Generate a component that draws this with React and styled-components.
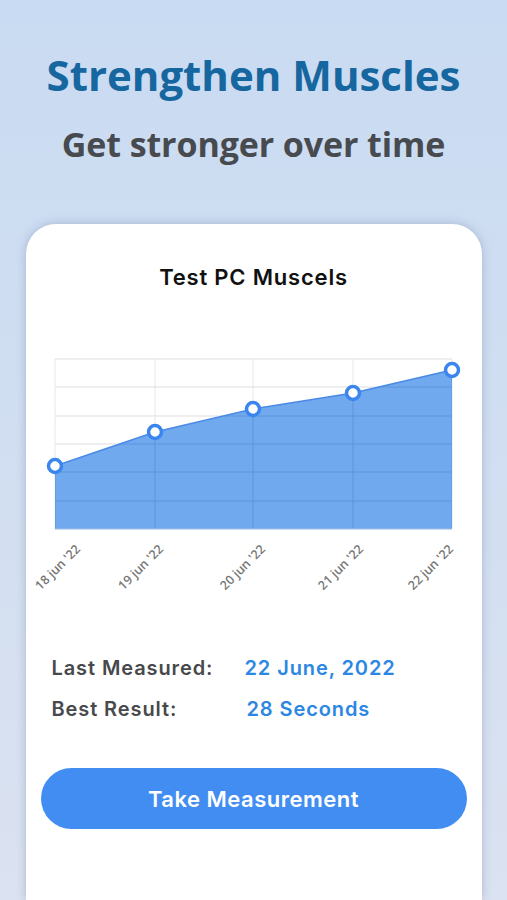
import styled, { createGlobalStyle } from "styled-components";

const GlobalStyle = createGlobalStyle`
    html, body {
        margin: 0;
        padding: 0;
    }

    body {
        background: linear-gradient(180deg, #c9dbf2 0%, #d3dff1 60%, #dbe2f1 100%);
        font-family: "Open Sans", "Liberation Sans", sans-serif;
        height: 900px;
        overflow: hidden;
    }
`;

const Screen = styled.div`
    display: flex;
    flex-direction: column;
    align-items: center;
    height: 900px;
`;

const Header = styled.header`
    display: flex;
    flex-direction: column;
    align-items: center;
    padding-top: 48px;

    h1 {
        margin: 0;
        font-size: 42px;
        line-height: 54px;
        font-weight: 700;
        color: #16669f;
        letter-spacing: 0;
    }

    h2 {
        margin: 20px 0 0;
        font-size: 34px;
        line-height: 44px;
        font-weight: 700;
        color: #474a4f;
        letter-spacing: -0.1px;
    }
`;

const Card = styled.section`
    margin-top: 58px;
    width: 456px;
    flex: 1;
    background-color: #ffffff;
    border-radius: 30px 30px 0 0;
    box-shadow: 0 0 10px rgba(90, 110, 150, 0.35);
    display: flex;
    flex-direction: column;
    align-items: center;
    padding-top: 39px;
    box-sizing: border-box;
    font-family: Inter, "Liberation Sans", sans-serif;
`;

const CardTitle = styled.h3`
    margin: 0;
    font-size: 22px;
    line-height: 28px;
    font-weight: 600;
    letter-spacing: 0.8px;
    color: #111111;
`;

const Chart = styled.svg`
    display: block;
    margin-top: 48px;
`;

const Stats = styled.div`
    display: grid;
    grid-template-columns: 193px auto;
    row-gap: 14px;
    align-self: flex-start;
    margin: 56px 0 0 26px;
    font-size: 20px;
    line-height: 27px;
    font-weight: 600;
    letter-spacing: 0.9px;
`;

const Label = styled.span`
    color: #47494c;
`;

const Value = styled.span`
    color: #2b87e3;
    padding-left: ${({ $shift }) => $shift || 0}px;
`;

const Button = styled.button`
    margin-top: 45px;
    width: 426px;
    height: 61px;
    border: none;
    border-radius: 31px;
    background-color: #418df2;
    color: #ffffff;
    font-family: Inter, "Liberation Sans", sans-serif;
    font-size: 22px;
    font-weight: 600;
    letter-spacing: 0.5px;
    cursor: pointer;
`;

// chart geometry, card-local coordinates
const left = 29;
const right = 426;
const top = 20;
const bottom = 190;
const cols = [29, 129, 227, 327, 426];
const rows = [20, 48, 77, 105, 133, 162, 190];
const points = [
    { x: 29, y: 127, label: "18 jun '22", end: 55 },
    { x: 129, y: 93, label: "19 jun '22", end: 138 },
    { x: 227, y: 70, label: "20 jun '22", end: 240 },
    { x: 327, y: 54, label: "21 jun '22", end: 338 },
    { x: 426, y: 31, label: "22 jun '22", end: 428 },
];

function ProgressChart() {

    const line = points.map((p, i) => `${i === 0 ? "M" : "L"}${p.x} ${p.y}`).join(" ");
    const area = `${line} L${right} ${bottom} L${left} ${bottom} Z`;

    return (
        <Chart width="456" height="260" viewBox="0 0 456 260">
            <defs>
                <clipPath id="areaClip">
                    <path d={area} />
                </clipPath>
            </defs>

            {rows.map(y => <line key={"r" + y} x1={left} x2={right} y1={y} y2={y} stroke="#dedede" strokeWidth="1.2" />)}
            {cols.map(x => <line key={"c" + x} x1={x} x2={x} y1={top} y2={bottom} stroke="#e8e8e8" strokeWidth="1" />)}

            <path d={area} fill="#70a9ee" />

            <g clipPath="url(#areaClip)">
                {rows.map(y => <line key={"ir" + y} x1={left} x2={right} y1={y} y2={y} stroke="#5f95dc" strokeWidth="1.2" />)}
                {cols.map(x => <line key={"ic" + x} x1={x} x2={x} y1={top} y2={bottom} stroke="#5f95dc" strokeWidth="1" />)}
            </g>

            <path d={line} fill="none" stroke="#4a8ae6" strokeWidth="1.5" />
            <line x1={left} x2={right} y1={bottom} y2={bottom} stroke="#a8cbf0" strokeWidth="1" />

            {points.map(p => (
                <circle key={p.x} cx={p.x} cy={p.y} r="6.5" fill="#ffffff" stroke="#3a86ee" strokeWidth="3.5" />
            ))}

            {points.map(p => (
                <text
                    key={"t" + p.x}
                    x={p.end}
                    y={bottom + 21}
                    transform={`rotate(-45 ${p.end} ${bottom + 21})`}
                    textAnchor="end"
                    fontSize="12.5"
                    fontWeight="600"
                    fontFamily='"Open Sans", "Liberation Sans", sans-serif'
                    fill="#767676"
                >
                    {p.label}
                </text>
            ))}
        </Chart>
    );

}

export default function App() {

    return (
        <>
            <GlobalStyle />
            <Screen>

                <Header>
                    <h1>Strengthen Muscles</h1>
                    <h2>Get stronger over time</h2>
                </Header>

                <Card>
                    <CardTitle>Test PC Muscels</CardTitle>

                    <ProgressChart />

                    <Stats>
                        <Label>Last Measured:</Label>
                        <Value>22 June, 2022</Value>
                        <Label>Best Result:</Label>
                        <Value $shift={2}>28 Seconds</Value>
                    </Stats>

                    <Button>Take Measurement</Button>
                </Card>

            </Screen>
        </>
    );

};
